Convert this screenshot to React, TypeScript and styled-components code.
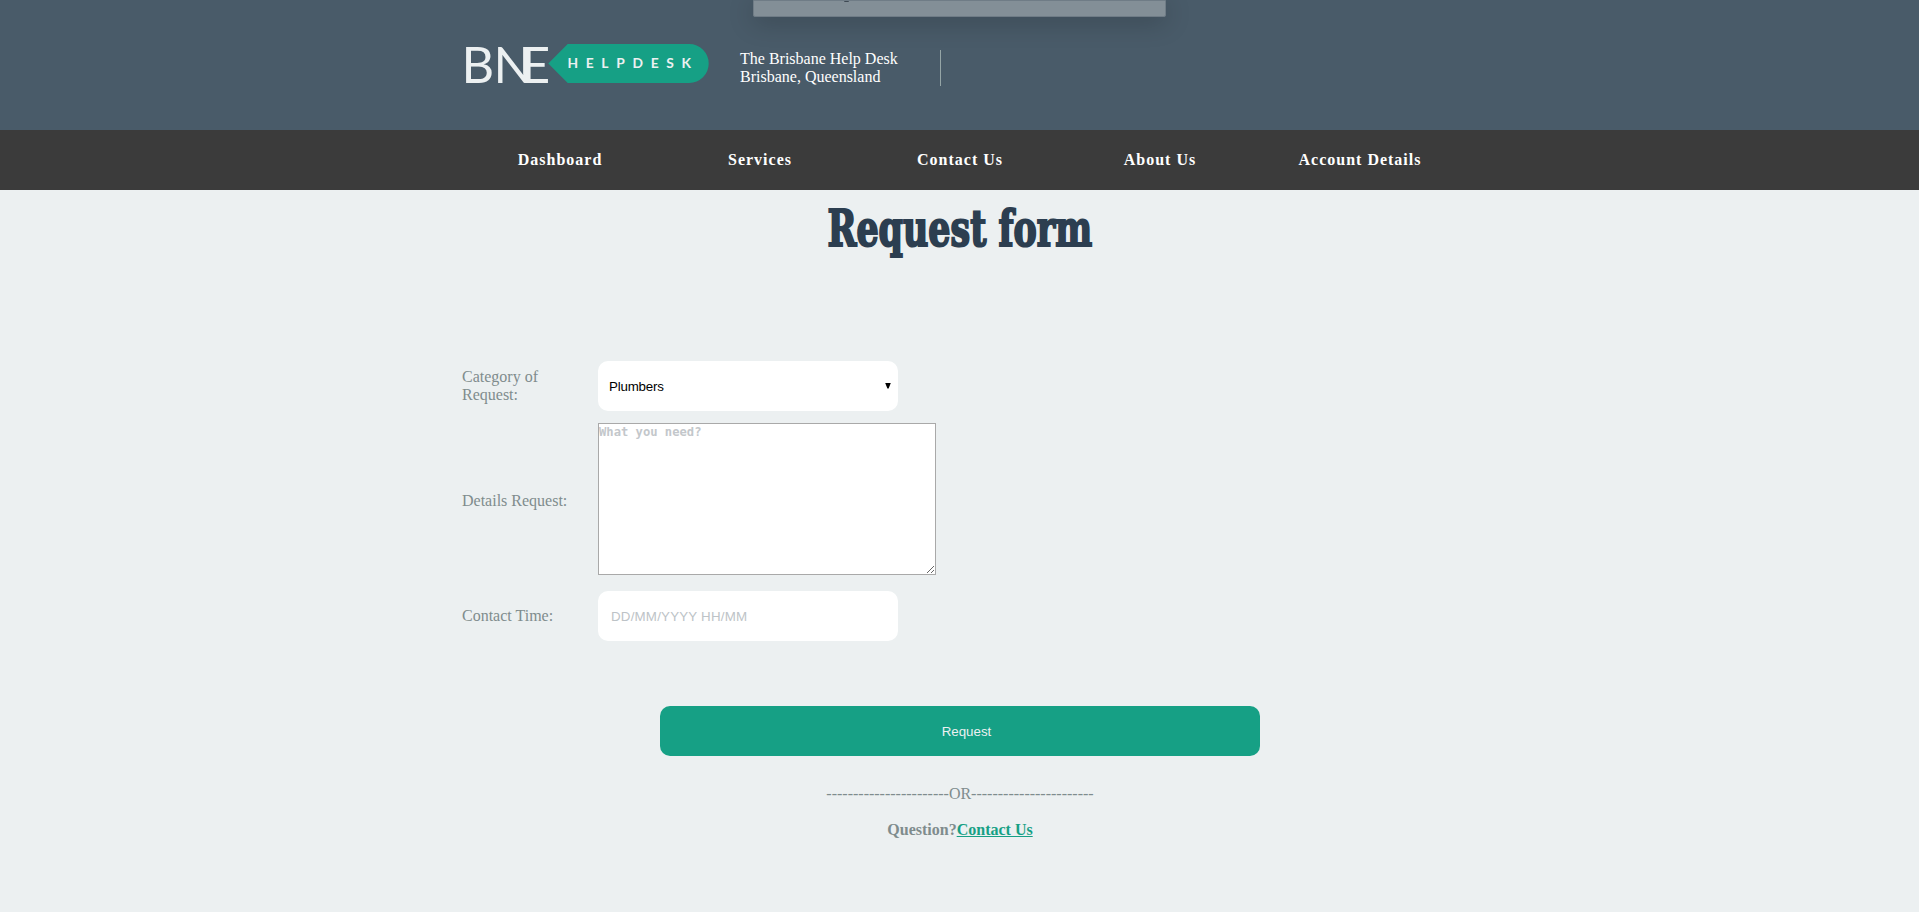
import React from 'react';
import styled, { createGlobalStyle } from 'styled-components';

const GlobalStyle = createGlobalStyle`
  * { box-sizing: border-box; }
  body {
    margin: 0;
    background: #ecf0f1;
    color: #7f8c8d;
    font: 16px/18px "Liberation Serif", serif;
  }
`;

const Page = styled.div`
  position: relative;
  height: 912px;
  overflow: hidden;
`;

const Header = styled.header`
  height: 130px;
  background: #495b69;
`;

const HeaderInner = styled.div`
  display: flex;
  align-items: flex-start;
  width: 1000px;
  margin: 0 auto 0 460px;
  padding-top: 32px;
`;

const Logo = styled.svg`
  display: block;
  width: 251px;
  height: 64px;
`;

const Tagline = styled.div`
  width: 201px;
  height: 36px;
  margin: 18px 0 0 29px;
  border-right: 1px solid #95a5a6;
  color: #fff;
`;

const DropPanel = styled.div`
  position: absolute;
  top: 0;
  left: 753px;
  width: 413px;
  height: 17px;
  overflow: hidden;
  border: 1px solid #6f7c86;
  border-radius: 0 0 2px 2px;
  background: #838f97;
`;

const PanelShadow = styled.div`
  position: absolute;
  top: 0;
  left: 753px;
  width: 413px;
  height: 17px;
  box-shadow: 0 5px 26px rgba(0, 0, 0, 0.22);
`;

const PanelMark = styled.div`
  width: 5px;
  height: 1px;
  margin-left: 90px;
  border-radius: 0 0 2px 2px;
  background: #3f4a54;
`;

const Nav = styled.nav`
  height: 60px;
  background: #3b3b3b;
`;

const NavList = styled.div`
  display: grid;
  grid-template-columns: repeat(5, 200px);
  width: 1000px;
  margin: 0 auto 0 460px;
`;

const NavLink = styled.a`
  color: #fff;
  font-weight: bold;
  letter-spacing: 1px;
  line-height: 60px;
  text-align: center;
`;

const Title = styled.h1`
  display: flex;
  justify-content: center;
  height: 171px;
  margin: 0;
  padding: 3px 0 0 0;
  color: #2c3e50;
  font: bold 49.5px/72px "DejaVu Serif", serif;
  -webkit-text-stroke: 2.2px #2c3e50;
  white-space: nowrap;
`;

const TitleText = styled.span`
  height: 72px;
  transform: scaleX(0.705);
`;

const Form = styled.form`
  width: 1000px;
  margin: 0 auto 0 460px;
`;

const Row = styled.div<{ $gap: number }>`
  display: grid;
  grid-template-columns: 136px auto;
  justify-content: start;
  align-items: center;
  padding-left: 2px;
  margin-bottom: ${(p) => p.$gap}px;
`;

const Label = styled.label<{ $drop?: number }>`
  width: 110px;
  padding-top: ${(p) => p.$drop ?? 0}px;
`;

const fieldFont = '13.333px "Liberation Sans", Arial, sans-serif';

const Select = styled.div`
  display: flex;
  align-items: center;
  justify-content: space-between;
  width: 300px;
  height: 50px;
  padding: 0 7px 0 11px;
  border-radius: 10px;
  background: #fff;
  color: #000;
  font: ${fieldFont};
  letter-spacing: -0.2px;
`;

const Arrow = styled.span`
  width: 6px;
  height: 6px;
  margin-bottom: 1px;
  background: #000;
  clip-path: polygon(0 0, 100% 0, 60% 100%, 40% 100%);
`;

const TextArea = styled.textarea`
  display: block;
  width: 338px;
  height: 152px;
  padding: 0;
  border: 1px solid #a9a9a9;
  border-radius: 0;
  background: #fff;
  font: bold 12.17px/17px "DejaVu Sans Mono", monospace;
  &::placeholder { color: #c3c7cb; opacity: 1; }
`;

const Input = styled.input`
  width: 300px;
  height: 50px;
  padding: 0 13px;
  border: 0;
  border-radius: 10px;
  background: #fff;
  font: ${fieldFont};
  letter-spacing: 0.2px;
  &::placeholder { color: #bdc3c7; opacity: 1; }
`;

const Submit = styled.button`
  display: block;
  width: 600px;
  height: 50px;
  margin: 0 auto;
  padding: 0 0 0 13px;
  border: 0;
  border-radius: 10px;
  background: #16a085;
  color: #ecf0f1;
  font: ${fieldFont};
`;

const Footer = styled.div`
  display: flex;
  flex-direction: column;
  align-items: center;
  gap: 18px;
  margin-top: 29px;
  padding-left: 1px;
`;

const Question = styled.div`
  font-weight: bold;
`;

const Link = styled.a`
  color: #16a085;
  text-decoration: underline;
`;

const navItems = ['Dashboard', 'Services', 'Contact Us', 'About Us', 'Account Details'];

export default function App() {
  return (
    <Page>
      <GlobalStyle />
      <Header>
        <HeaderInner>
          <Logo viewBox="-5 -8 251 64" aria-label="BNE Helpdesk">
            <path d="M83.3 23.5 L102.7 4 H224.2 A19.5 19.5 0 0 1 224.2 43 H102.7 Z" fill="#16a085" />
            <text
              x="-3.6 28.5 56"
              y="42.6"
              fill="#ecf0f1"
              fontFamily="Lato, sans-serif"
              fontSize="50.5"
            >
              BNE
            </text>
            <text
              x="102.4"
              y="28.3"
              fill="#ecf0f1"
              fontFamily="Lato, sans-serif"
              fontWeight="700"
              fontSize="13.8"
              letterSpacing="7.7"
            >
              HELPDESK
            </text>
          </Logo>
          <Tagline>
            The Brisbane Help Desk
            <br />
            Brisbane, Queensland
          </Tagline>
        </HeaderInner>
      </Header>
      <PanelShadow />
      <DropPanel>
        <PanelMark />
      </DropPanel>
      <Nav>
        <NavList>
          {navItems.map((item) => (
            <NavLink key={item}>{item}</NavLink>
          ))}
        </NavList>
      </Nav>
      <Title>
        <TitleText>Request form</TitleText>
      </Title>
      <Form onSubmit={(e) => e.preventDefault()}>
        <Row $gap={12}>
          <Label>
            Category of
            <br />
            Request:
          </Label>
          <Select>
            Plumbers
            <Arrow />
          </Select>
        </Row>
        <Row $gap={16}>
          <Label $drop={4}>Details Request:</Label>
          <TextArea placeholder="What you need?" />
        </Row>
        <Row $gap={65}>
          <Label>Contact Time:</Label>
          <Input placeholder="DD/MM/YYYY HH/MM" />
        </Row>
        <Submit>Request</Submit>
      </Form>
      <Footer>
        <div>-----------------------OR-----------------------</div>
        <Question>
          Question?<Link>Contact Us</Link>
        </Question>
      </Footer>
    </Page>
  );
}
